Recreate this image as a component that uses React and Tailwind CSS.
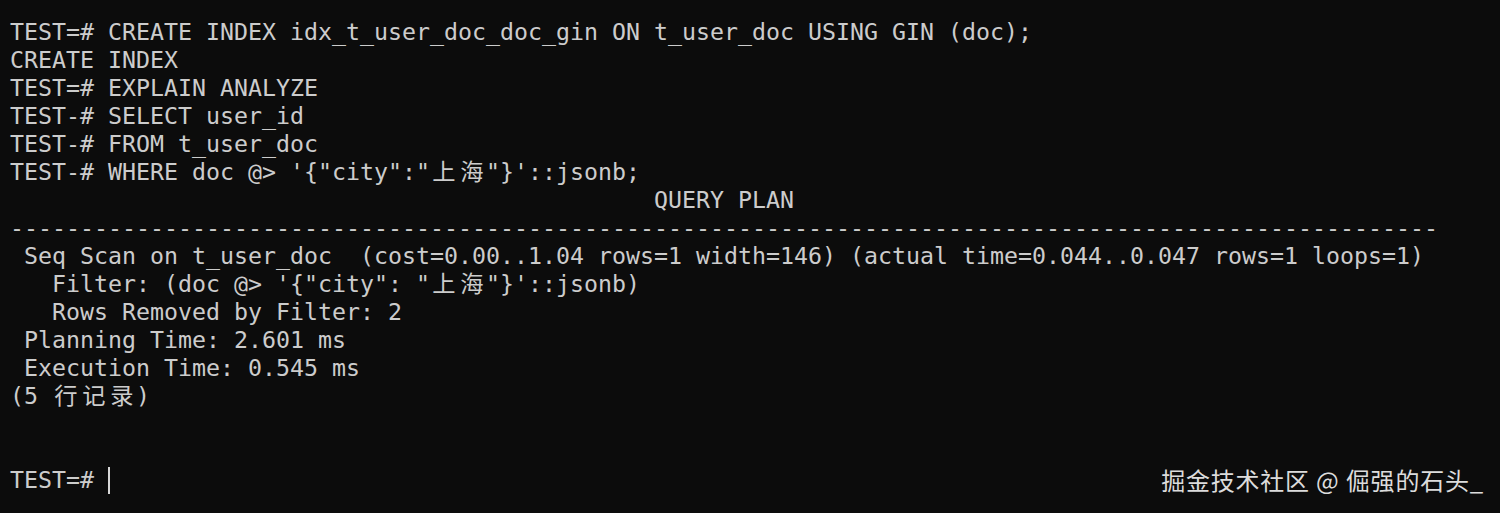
const lines = [
  'TEST=# CREATE INDEX idx_t_user_doc_doc_gin ON t_user_doc USING GIN (doc);',
  'CREATE INDEX',
  'TEST=# EXPLAIN ANALYZE',
  'TEST-# SELECT user_id',
  'TEST-# FROM t_user_doc',
  'TEST-# WHERE doc @> \'{"city":"上海"}\'::jsonb;',
  ' '.repeat(46) + 'QUERY PLAN',
  '-'.repeat(102),
  ' Seq Scan on t_user_doc  (cost=0.00..1.04 rows=1 width=146) (actual time=0.044..0.047 rows=1 loops=1)',
  '   Filter: (doc @> \'{"city": "上海"}\'::jsonb)',
  '   Rows Removed by Filter: 2',
  ' Planning Time: 2.601 ms',
  ' Execution Time: 0.545 ms',
  '(5 行记录)',
  '',
  '',
]

// CJK glyphs take two terminal cells
function Cells({ text }) {
  return [...text].map((ch, i) =>
    /[\u3000-\u9fff]/.test(ch) ? (
      <span key={i} className="inline-block w-[28px] text-center">{ch}</span>
    ) : (
      ch
    )
  )
}

export default function App() {
  return (
    <div className="relative w-[1500px] h-[513px] overflow-hidden bg-[#0c0c0c] text-[#cccccc]">
      <div className="pt-[18px] pl-[10px] font-['DejaVu_Sans_Mono','Noto_Sans_CJK_SC',monospace] text-[23.25px] leading-[28px] whitespace-pre">
        {lines.map((l, i) => (
          <div key={i} className="h-[28px]">
            <Cells text={l} />
          </div>
        ))}
        <div className="h-[28px] flex items-center">
          <span>TEST=# </span>
          <span className="inline-block w-[2px] h-[27px] bg-[#d8d8d8]" />
        </div>
      </div>

      {/* watermark */}
      <div className="absolute right-[16px] bottom-[18px] font-['Noto_Sans_CJK_SC',sans-serif] text-[24px] tracking-[0.8px] leading-[30px] text-[#dcdcdc] whitespace-pre">
        掘金技术社区 @ 倔强的石头_
      </div>
    </div>
  )
}
